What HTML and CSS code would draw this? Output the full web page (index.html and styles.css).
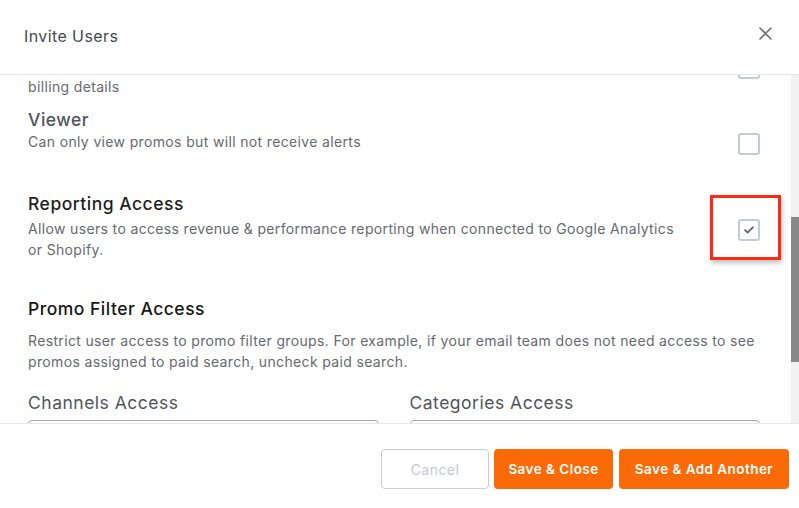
FILE: index.html
```html
<!DOCTYPE html>
<html lang="en">
<head>
<meta charset="utf-8">
<title>Invite Users</title>
<link rel="stylesheet" href="styles.css">
</head>
<body>
<div class="modal">
  <header class="modal-header">
    <h1 class="modal-title">Invite Users</h1>
    <button class="close-btn" aria-label="Close">
      <svg width="13" height="13" viewBox="0 0 13 13"><path d="M1 1 L12 12 M12 1 L1 12" stroke="#707070" stroke-width="1.6" stroke-linecap="round" fill="none"/></svg>
    </button>
  </header>

  <div class="modal-main">
    <main class="modal-body">
      <div class="field">
        <label class="field-label">Email Addresses</label>
        <div class="textarea"></div>
        <p class="hint">Separate multiple email addresses with commas.</p>
      </div>

      <h2 class="section-title">User Role</h2>
      <p class="section-desc">Choose the level of access invited users will have.</p>

      <div class="role role-admin">
        <div class="role-text">
          <div class="role-name">Admin</div>
          <div class="role-desc">Full access to promos, alerts, settings, user management and<br>billing details</div>
        </div>
        <span class="checkbox"></span>
      </div>

      <div class="role role-viewer" id="scroll-anchor">
        <div class="role-text">
          <div class="role-name">Viewer</div>
          <div class="role-desc">Can only view promos but will not receive alerts</div>
        </div>
        <span class="checkbox"></span>
      </div>

      <div class="role role-reporting">
        <div class="role-text">
          <div class="role-name strong">Reporting Access</div>
          <div class="role-desc">Allow users to access revenue &amp; performance reporting when connected to Google Analytics or Shopify.</div>
        </div>
        <span class="checkbox-wrap">
          <span class="checkbox checked">
            <svg width="10" height="8" viewBox="0 0 10 8"><path d="M1 4.2 L3.6 6.6 L9 1.2" stroke="#56608c" stroke-width="1.7" fill="none" stroke-linecap="round" stroke-linejoin="round"/></svg>
          </span>
          <span class="highlight"></span>
        </span>
      </div>

      <h2 class="filter-title">Promo Filter Access</h2>
      <p class="filter-desc">Restrict user access to promo filter groups. For example, if your email team does not need access to see promos assigned to paid search, uncheck paid search.</p>

      <div class="selects">
        <div class="select-group">
          <div class="select-label">Channels Access</div>
          <div class="select-box"></div>
        </div>
        <div class="select-group">
          <div class="select-label">Categories Access</div>
          <div class="select-box"></div>
        </div>
      </div>
    </main>
    <div class="scrollbar"><div class="scrollbar-thumb"></div></div>
  </div>

  <footer class="modal-footer">
    <button class="btn btn-cancel">Cancel</button>
    <button class="btn btn-primary">Save &amp; Close</button>
    <button class="btn btn-primary btn-wide">Save &amp; Add Another</button>
  </footer>
</div>
<script src="script.js"></script>
</body>
</html>
```

FILE: styles.css
```css
* { box-sizing: border-box; }
html, body { margin: 0; padding: 0; height: 100%; }
body {
  font-family: Inter, "Noto Sans", sans-serif;
  background: #ffffff;
  color: #333;
  overflow: hidden;
}
.modal {
  display: flex;
  flex-direction: column;
  height: 508px;
}
.modal-header {
  flex: none;
  height: 75px;
  display: flex;
  align-items: center;
  justify-content: space-between;
  padding: 0 27px 2px 24px;
  border-bottom: 1px solid #e8e8e8;
}
.modal-title {
  margin: 0;
  font-size: 16px;
  font-weight: 400;
  letter-spacing: 0.4px;
  color: #444a50;
}
.close-btn {
  border: 0;
  background: none;
  padding: 0;
  display: flex;
  margin-top: -6px;
}

.modal-main {
  flex: 1;
  min-height: 0;
  display: flex;
}
.modal-body {
  flex: 1;
  position: relative;
  overflow: hidden;
  padding: 24px 31px 104px 28px;
}
.scrollbar {
  flex: none;
  width: 8px;
  background: #f1f1f1;
}
.scrollbar-thumb {
  margin-top: 142px;
  height: 145px;
  background: #888888;
}

.field-label {
  display: block;
  font-size: 16px;
  line-height: 22px;
  color: #555a60;
}
.textarea {
  margin-top: 8px;
  height: 96px;
  border: 1px solid #bbb;
  border-radius: 4px;
}
.hint {
  margin: 6px 0 0;
  font-size: 13px;
  line-height: 21px;
  color: #777;
}
.section-title {
  margin: 30px 0 0;
  font-size: 17px;
  line-height: 26px;
  font-weight: 500;
  color: #1c1c1c;
}
.section-desc {
  margin: 8px 0 0;
  font-size: 14px;
  line-height: 21px;
  color: #666;
}

.role {
  display: flex;
  justify-content: space-between;
  align-items: flex-start;
}
.role-admin { margin-top: 36px; }
.role-viewer { margin-top: 12px; }
.role-reporting { margin-top: 37px; }
.role-text { max-width: 662px; }
.role-name {
  font-size: 17.5px;
  line-height: 22px;
  font-weight: 500;
  letter-spacing: 0.5px;
  color: #50555c;
}
.role-name.strong {
  color: #1e1e1e;
  line-height: 24px;
}
.role-reporting .role-desc { margin-top: 2px; }
.role-desc {
  font-size: 14px;
  line-height: 21px;
  letter-spacing: 0.35px;
  color: #666a70;
}
.checkbox {
  flex: none;
  width: 22px;
  height: 22px;
  border: 2px solid #c5c9dc;
  border-radius: 3px;
  display: flex;
  align-items: center;
  justify-content: center;
  margin-top: 24px;
}
.role-admin .checkbox { margin-top: 24px; }
.checkbox-wrap {
  position: relative;
  flex: none;
  margin-top: 27px;
}
.checkbox-wrap .checkbox { margin-top: 0; }
.highlight {
  position: absolute;
  left: -28px;
  top: -24px;
  width: 71px;
  height: 65px;
  border: 3px solid #ff2a12;
  box-shadow: 1px 3px 5px rgba(0, 0, 0, 0.25);
}

.filter-title {
  margin: 36px 0 0;
  font-size: 17.5px;
  line-height: 26px;
  font-weight: 500;
  letter-spacing: 0.5px;
  color: #161616;
}
.filter-desc {
  margin: 8px 0 0;
  font-size: 14px;
  line-height: 21px;
  letter-spacing: 0.35px;
  color: #666a70;
}

.selects {
  margin-top: 20px;
  display: grid;
  grid-template-columns: 1fr 1fr;
  column-gap: 31px;
}
.select-label {
  font-size: 17.5px;
  line-height: 22px;
  letter-spacing: 0.5px;
  color: #50555c;
}
.select-box {
  margin-top: 6px;
  height: 40px;
  border: 1px solid #a8a8a8;
  border-radius: 4px;
}

.modal-footer {
  flex: none;
  height: 85px;
  border-top: 1px solid #e8e8e8;
  display: flex;
  justify-content: flex-end;
  align-items: flex-start;
  gap: 5px;
  padding: 25px 10px 0 0;
}
.btn {
  height: 40px;
  border-radius: 4px;
  font-family: inherit;
  font-size: 13.5px;
  letter-spacing: 0.45px;
  padding: 0;
}
.btn-cancel {
  width: 108px;
  background: #fff;
  border: 1px solid #c9cbdc;
  color: #c5c7d8;
  font-size: 14px;
  font-weight: 400;
}
.btn-primary {
  width: 119px;
  background: #fa6a07;
  border: 0;
  color: #fff;
  font-weight: 600;
}
.btn-wide { width: 170px; margin-left: 1px; }
```

FILE: script.js
```js
var body = document.querySelector('.modal-body');
var anchor = document.getElementById('scroll-anchor');
body.scrollTop = anchor.offsetTop - 34;
```
